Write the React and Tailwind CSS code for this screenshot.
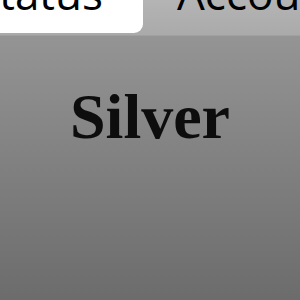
export default function App() {
  return (
    <div className="w-[300px] h-[300px] overflow-hidden flex flex-col bg-gradient-to-b from-[#9a9a9a] to-[#6c6c6c]">
      <div className="h-[36px] shrink-0 flex bg-gradient-to-b from-[#b4b4b4] to-[#aaaaaa] border-b border-[#a0a0a0]">
        <div className="w-[143px] h-[33px] bg-white rounded-br-[9px] overflow-hidden flex items-start justify-end pr-[40px]">
          <span className="text-[44px] leading-none text-black mt-[-29px] whitespace-nowrap" style={{ fontFamily: '"Open Sans", sans-serif' }}>Status</span>
        </div>
        <div className="flex-1 overflow-hidden flex items-start pl-[34px]">
          <span className="text-[44px] leading-none text-black mt-[-29px] whitespace-nowrap" style={{ fontFamily: '"Open Sans", sans-serif' }}>Account</span>
        </div>
      </div>
      <div className="flex justify-center pt-[49px]">
        <span className="text-[64px] leading-none font-bold text-[#0d0d0d]" style={{ fontFamily: '"Liberation Serif", serif' }}>Silver</span>
      </div>
    </div>
  );
}
